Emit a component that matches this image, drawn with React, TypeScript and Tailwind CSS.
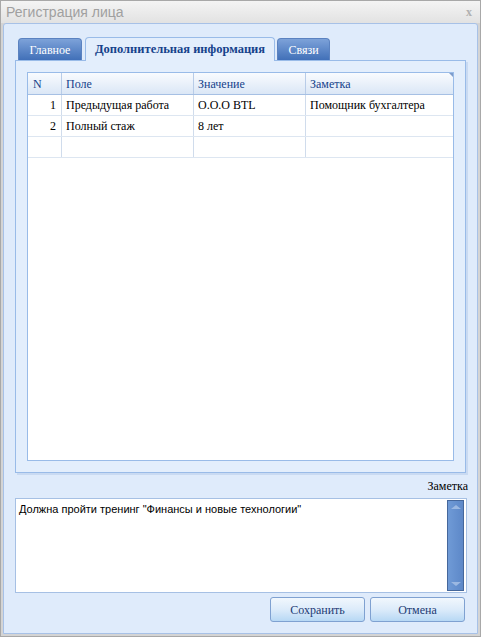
import React from "react";

const serif = { fontFamily: '"Liberation Serif", "Times New Roman", serif' };
const sans = { fontFamily: '"Liberation Sans", Arial, sans-serif' };

const rows = [
  { n: "1", f: "Предыдущая работа", v: "O.O.O BTL", z: "Помощник бухгалтера" },
  { n: "2", f: "Полный стаж", v: "8 лет", z: "" },
  { n: "", f: "", v: "", z: "" },
];

function Tab({ label, active, w }: { label: string; active?: boolean; w: string }) {
  if (active) {
    return (
      <div className={`${w} h-[24px] -mb-px flex items-center justify-center rounded-t-[4px] border border-b-0 border-[#99bbe8] bg-[#e3eefc] text-[#15428b] font-bold text-[12.5px] relative z-10`}>
        {label}
      </div>
    );
  }
  return (
    <div className={`${w} h-[22px] mt-[1px] flex items-center justify-center rounded-t-[4px] border border-b-0 border-[#5b82c0] bg-gradient-to-b from-[#7da2d9] to-[#4170b8] text-white text-[12px]`}>
      {label}
    </div>
  );
}

export default function App() {
  return (
    <div className="w-[481px] h-[637px] bg-[#d4d4d4] border border-[#a8a8a8] flex flex-col" style={serif}>
      <div className="h-[22px] shrink-0 flex items-center justify-between pl-[5px] pr-[8px] bg-gradient-to-b from-[#f4f4f4] to-[#e2e2e2]">
        <span className="text-[14px] text-[#a0a0a0]" style={sans}>Регистрация лица</span>
        <span className="text-[12px] text-[#b0b0b0] font-bold" style={serif}>x</span>
      </div>
      <div className="flex-1 mx-[2px] mb-[2px] border border-[#a7c1e7] rounded-t-[3px] bg-[#dfebfb] px-[11px] pt-[12px] pb-[11px] flex flex-col">
        <div className="flex items-end pl-[3px] h-[24px]">
          <Tab label="Главное" w="w-[64px]" />
          <div className="w-[3px]" />
          <Tab label="Дополнительная информация" active w="w-[190px]" />
          <div className="w-[2px]" />
          <Tab label="Связи" w="w-[53px]" />
        </div>
        <div className="h-[413px] border border-[#99bbe8] bg-[#e3eefc] p-[11px] shadow-[2px_2px_0_#c9daf2]">
          <div className="h-full bg-white border border-[#99bbe8] flex flex-col">
            <div className="flex h-[22px] bg-gradient-to-b from-[#f9fbfe] to-[#dbe7f6] border-b border-[#a6c0e4] text-[#15428b] text-[12px] relative">
              <div className="w-[34px] border-r border-[#b8cce8] px-[5px] flex items-center">N</div>
              <div className="w-[132px] border-r border-[#b8cce8] px-[4px] flex items-center">Поле</div>
              <div className="w-[112px] border-r border-[#b8cce8] px-[4px] flex items-center">Значение</div>
              <div className="flex-1 px-[4px] flex items-center">Заметка</div>
              <div className="absolute right-0 top-0 w-0 h-0 border-t-[4px] border-l-[4px] border-t-[#7d9ccb] border-l-transparent" />
            </div>
            {rows.map((r, i) => (
              <div key={i} className="flex h-[21px] border-b border-[#dde6f1] text-[12px] text-black">
                <div className="w-[34px] border-r border-[#d0dcec] px-[5px] flex items-center justify-end">{r.n}</div>
                <div className="w-[132px] border-r border-[#d0dcec] px-[4px] flex items-center">{r.f}</div>
                <div className="w-[112px] border-r border-[#d0dcec] px-[4px] flex items-center">{r.v}</div>
                <div className="flex-1 px-[4px] flex items-center">{r.z}</div>
              </div>
            ))}
          </div>
        </div>
        <div className="h-[25px] flex items-end justify-end -mr-[2px] text-[12px] text-black pb-[3px]">Заметка</div>
        <div className="h-[95px] bg-white border border-[#a6c0e4] flex -mr-[1px]">
          <div className="flex-1 px-[3px] pt-[2px] text-[11px] text-black" style={sans}>
            Должна пройти тренинг "Финансы и новые технологии"
          </div>
          <div className="w-[17px] my-[1px] mr-[2px] bg-gradient-to-r from-[#6f9ad6] to-[#5d88c8] border border-[#45679b] flex flex-col justify-between items-center py-[4px]">
            <div className="w-0 h-0 border-l-[5px] border-r-[5px] border-b-[4px] border-l-transparent border-r-transparent border-b-[#9bb8e2]" />
            <div className="w-0 h-0 border-l-[5px] border-r-[5px] border-t-[4px] border-l-transparent border-r-transparent border-t-[#9bb8e2]" />
          </div>
        </div>
        <div className="flex justify-end gap-[5px] mt-[4px] pr-[1px]">
          {["Сохранить", "Отмена"].map((b) => (
            <div key={b} className="w-[95px] h-[25px] rounded-[3px] border border-[#7fa1d1] bg-gradient-to-b from-[#f1f7fd] via-[#dcebfa] to-[#b7d8f4] flex items-center justify-center text-[12px] text-[#1d3a73]">
              {b}
            </div>
          ))}
        </div>
      </div>
    </div>
  );
}
